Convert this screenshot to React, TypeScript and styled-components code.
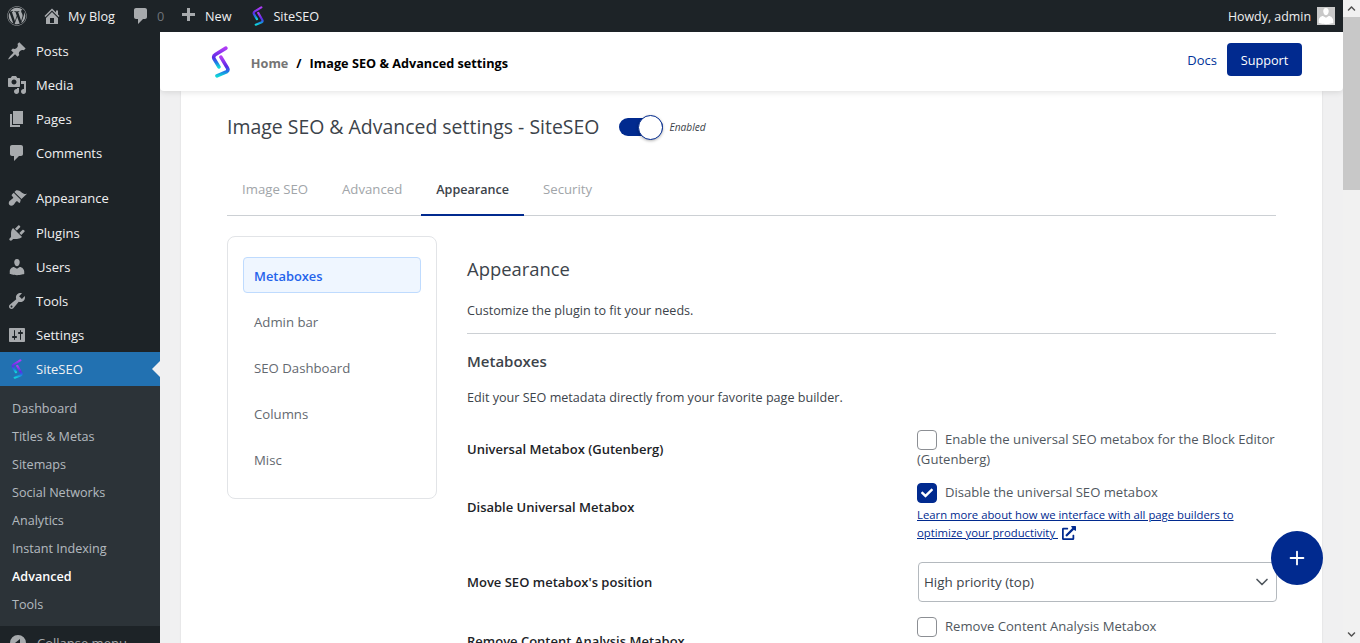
import React from 'react';
import styled, { createGlobalStyle } from 'styled-components';
import { FaWordpress, FaCheck, FaChevronUp, FaChevronDown, FaExternalLinkAlt } from 'react-icons/fa';
import { FiChevronDown, FiPlus } from 'react-icons/fi';

const GlobalStyle = createGlobalStyle`
  html, body {
    margin: 0;
    padding: 0;
    height: 100%;
    overflow: hidden;
    background: #f0f0f1;
  }
  * { box-sizing: border-box; }
  body {
    font-family: "Open Sans", "Noto Sans", sans-serif;
    font-size: 13px;
    color: #3c434a;
  }
`;

const Page = styled.div`
  position: relative;
  width: 1360px;
  height: 643px;
  display: flex;
  overflow: hidden;
`;

const Window = styled.div`
  flex: 1;
  min-width: 0;
  display: flex;
  flex-direction: column;
`;

const AdminBar = styled.header`
  height: 32px;
  flex: none;
  background: #1d2327;
  display: flex;
  align-items: center;
  justify-content: space-between;
  padding: 0 8px 0 7px;
  font-size: 12.7px;
`;

const BarGroup = styled.div`
  display: flex;
  align-items: center;
`;

const BarItem = styled.div<{ $gap?: number; $width?: number }>`
  display: flex;
  align-items: center;
  gap: ${(p) => p.$gap ?? 6}px;
  width: ${(p) => (p.$width ? `${p.$width}px` : 'auto')};
  color: #f0f0f1;
  svg { color: #a7aaad; flex: none; }
`;

const Howdy = styled.span`
  font-size: 12.4px;
`;

const Muted = styled.span`
  color: #6f7479;
`;

const Avatar = styled.span`
  width: 18px;
  height: 18px;
  margin-left: 6px;
  background: #c9c9c9;
  display: flex;
  align-items: center;
  justify-content: center;
  overflow: hidden;
  svg { color: #fff; }
`;

const Body = styled.div`
  flex: 1;
  min-height: 0;
  display: flex;
`;

const Sidebar = styled.nav`
  width: 160px;
  flex: none;
  background: #1d2327;
  display: flex;
  flex-direction: column;
  padding-top: 2px;
  overflow: hidden;
`;

const MenuGroup = styled.div`
  flex: none;
  margin-bottom: 11px;
`;

const MenuItem = styled.div<{ $active?: boolean }>`
  position: relative;
  height: 34.1px;
  flex: none;
  display: flex;
  align-items: center;
  padding-left: 7px;
  gap: 9px;
  font-size: 13px;
  color: #f0f0f1;
  background: ${(p) => (p.$active ? '#2271b1' : 'transparent')};
  svg { flex: none; color: #a7aaad; }
  ${(p) =>
    p.$active &&
    `&::after {
      content: '';
      position: absolute;
      right: 0;
      top: 9px;
      border: 8px solid transparent;
      border-right-color: #f0f0f1;
      border-left-width: 0;
    }`}
`;

const IconSlot = styled.span`
  width: 20px;
  height: 20px;
  display: flex;
  align-items: center;
  justify-content: center;
  flex: none;
`;

const SubMenu = styled.div`
  flex: none;
  background: #2c3338;
  padding: 8px 0 7px;
`;

const SubItem = styled.div<{ $current?: boolean }>`
  height: 28.15px;
  display: flex;
  align-items: center;
  padding-left: 12px;
  font-size: 12.6px;
  color: ${(p) => (p.$current ? '#fff' : 'rgba(240, 246, 252, 0.7)')};
  font-weight: ${(p) => (p.$current ? 600 : 400)};
`;

const Collapse = styled.div`
  flex: none;
  display: flex;
  align-items: center;
  gap: 9px;
  padding: 7px 0 0 8px;
  color: #a7aaad;
  font-size: 13px;
`;

const Main = styled.main`
  flex: 1;
  min-width: 0;
  display: flex;
  flex-direction: column;
  background: #f0f0f1;
  overflow: hidden;
`;

const TopBar = styled.div`
  position: relative;
  z-index: 2;
  height: 59px;
  flex: none;
  background: #fff;
  border-radius: 0 0 4px 4px;
  box-shadow: 0 1px 6px rgba(0, 0, 0, 0.12);
  display: flex;
  align-items: center;
  justify-content: space-between;
  padding: 0 41px 0 51px;
`;

const Crumbs = styled.div`
  display: flex;
  align-items: center;
  font-size: 12.7px;
  font-weight: 700;
  color: #000;
`;

const CrumbText = styled.span`
  padding-top: 2px;
`;

const CrumbHome = styled(CrumbText)`
  color: #757575;
  margin-left: 20px;
`;

const CrumbSep = styled(CrumbText)`
  margin: 0 8px;
`;

const TopActions = styled.div`
  display: flex;
  align-items: center;
  gap: 10px;
  margin-bottom: 4px;
`;

const DocsLink = styled.a`
  color: #003399;
  font-size: 13px;
  text-decoration: none;
`;

const SupportButton = styled.button`
  height: 33px;
  width: 75px;
  border: none;
  border-radius: 4px;
  background: #012a8f;
  color: #fff;
  font-family: inherit;
  font-size: 12.7px;
`;

const Card = styled.section`
  flex: 1;
  margin: 0 21px;
  background: #fff;
  box-shadow: 0 0 2px rgba(0, 0, 0, 0.1);
  padding: 21px 46px 0;
`;

const TitleRow = styled.div`
  display: flex;
  align-items: center;
  gap: 20px;
  height: 30px;
`;

const Title = styled.h1`
  margin: 0;
  font-size: 19.45px;
  font-weight: 400;
  line-height: 30px;
  color: #3c434a;
`;

const Toggle = styled.span`
  position: relative;
  width: 44px;
  height: 18px;
  border-radius: 9px;
  background: #012a8f;
  flex: none;
`;

const Knob = styled.span`
  position: absolute;
  right: 0;
  top: -3.5px;
  width: 25px;
  height: 25px;
  border-radius: 50%;
  background: #fff;
  border: 1px solid #012a8f;
  box-shadow: 0 1px 3px rgba(0, 0, 0, 0.3);
`;

const ToggleLabel = styled.em`
  font-size: 10.2px;
  color: #3c434a;
  margin: 0 0 1px -14px;
`;

const Tabs = styled.div`
  display: flex;
  margin-top: 28px;
  height: 46px;
  border-bottom: 1px solid #ccd0d4;
`;

const Tab = styled.div<{ $active?: boolean }>`
  padding: 0 15px 6px;
  height: 46px;
  display: flex;
  align-items: center;
  font-size: ${(p) => (p.$active ? 12.6 : 13.2)}px;
  font-weight: ${(p) => (p.$active ? 600 : 400)};
  color: ${(p) => (p.$active ? '#3c434a' : '#a1a5a9')};
  border-bottom: 2px solid ${(p) => (p.$active ? '#012a8f' : 'transparent')};
  margin-right: 4px;
`;

const Columns = styled.div`
  display: flex;
  gap: 30px;
  margin-top: 20px;
`;

const SideCard = styled.aside`
  width: 210px;
  height: 263px;
  flex: none;
  border: 1px solid #e2e4e7;
  border-radius: 8px;
  padding: 20px 15px;
  display: flex;
  flex-direction: column;
  gap: 10px;
`;

const SideItem = styled.div<{ $active?: boolean }>`
  height: 36px;
  display: flex;
  align-items: center;
  padding: 2px 10px 0;
  border-radius: 4px;
  font-size: ${(p) => (p.$active ? 12.9 : 13.2)}px;
  font-weight: ${(p) => (p.$active ? 600 : 500)};
  color: ${(p) => (p.$active ? '#2563eb' : '#646970')};
  background: ${(p) => (p.$active ? '#eff6ff' : 'transparent')};
  border: 1px solid ${(p) => (p.$active ? '#bfdbfe' : 'transparent')};
`;

const Content = styled.div`
  flex: 1;
  min-width: 0;
`;

const SectionTitle = styled.h2`
  margin: 19px 0 0;
  font-size: 18.4px;
  font-weight: 400;
  line-height: 28px;
  color: #3c434a;
`;

const Intro = styled.p`
  margin: 19px 0 0;
  font-size: 12.6px;
  line-height: 18px;
  padding-bottom: 13px;
  border-bottom: 1px solid #ccd0d4;
`;

const SubTitle = styled.h3`
  margin: 17px 0 0;
  font-size: 15px;
  font-weight: 600;
  line-height: 20px;
  color: #3c434a;
`;

const Desc = styled.p`
  margin: 17px 0 0;
  font-size: 12.6px;
  line-height: 20px;
`;

const Rows = styled.div`
  margin-top: 22px;
  display: grid;
  grid-template-columns: 450px 1fr;
  row-gap: 14px;
  align-items: start;
`;

const RowLabel = styled.div<{ $offset: number }>`
  margin-top: ${(p) => p.$offset}px;
  font-size: 13px;
  line-height: 20px;
  font-weight: 600;
  color: #1d2327;
`;

const Control = styled.div`
  font-size: 13.1px;
  line-height: 19px;
  color: #50575e;
`;

const CheckRow = styled.label`
  display: block;
`;

const Check = styled.span<{ $on?: boolean }>`
  display: inline-flex;
  align-items: center;
  justify-content: center;
  vertical-align: top;
  width: 20px;
  height: 20px;
  margin-right: 8px;
  border-radius: 4px;
  border: 1px solid ${(p) => (p.$on ? '#012a8f' : '#8c8f94')};
  background: ${(p) => (p.$on ? '#012a8f' : '#fff')};
  color: #fff;
`;

const LearnLink = styled.a`
  display: block;
  max-width: 330px;
  font-size: 11.3px;
  line-height: 18px;
  color: #012a8f;
  text-decoration: underline;
  margin: 3px 0 6px;
  svg { margin-left: 4px; vertical-align: -3px; }
`;

const SelectBox = styled.div`
  width: 100%;
  margin: 0 0 1px 1px;
  height: 40px;
  border: 1px solid #b4b9be;
  border-radius: 4px;
  display: flex;
  align-items: center;
  justify-content: space-between;
  padding: 0 4px 0 5px;
  font-size: 13.4px;
  color: #3c434a;
  svg { color: #50575e; }
`;

const Fab = styled.button`
  position: absolute;
  left: 1271px;
  top: 531px;
  width: 52px;
  height: 54px;
  border: none;
  border-radius: 50%;
  background: #012a8f;
  color: #fff;
  display: flex;
  align-items: center;
  justify-content: center;
  z-index: 3;
`;

const Scrollbar = styled.div`
  width: 17px;
  flex: none;
  background: #f1f1f1;
  display: flex;
  flex-direction: column;
  color: #505050;
`;

const ScrollArrow = styled.div`
  height: 17px;
  flex: none;
  display: flex;
  align-items: center;
  justify-content: center;
`;

const ScrollThumb = styled.div`
  width: 100%;
  height: 173px;
  flex: none;
  background: #c8c8c8;
`;

const ScrollTrack = styled.div`
  flex: 1;
  width: 100%;
`;

const Logo: React.FC<{ size: number; id: string }> = ({ size, id }) => (
  <svg width={size * 0.62} height={size} viewBox="0 0 20 32" fill="none">
    <defs>
      <linearGradient id={id} x1="0.5" y1="0" x2="0.5" y2="1">
        <stop offset="0" stopColor="#b13cf5" />
        <stop offset="0.5" stopColor="#5a2ae6" />
        <stop offset="0.78" stopColor="#1c7fe6" />
        <stop offset="1" stopColor="#10d5d8" />
      </linearGradient>
    </defs>
    <path
      d="M15 2 L4.500 8.500 Q2 10 3 12.500 L8 21"
      stroke={`url(#${id})`}
      strokeWidth="3.6"
      strokeLinecap="round"
      strokeLinejoin="round"
    />
    <path
      d="M10 11 L16.500 22 Q18 24.500 15.500 26 L6 30"
      stroke={`url(#${id})`}
      strokeWidth="3.6"
      strokeLinecap="round"
      strokeLinejoin="round"
    />
  </svg>
);

// wp-admin menu glyphs
const glyphs = {
  home: 'M16 8.500l1.530 1.530-1.060 1.060L10 4.620l-6.470 6.470-1.060-1.060L10 2.500l4 4v-2h2v4zm-6-2.460l6 5.990V18H4v-5.970zM12 17v-5H8v5h4z',
  comment: 'M5 2h9c1.100 0 2 .9 2 2v7c0 1.100-.9 2-2 2h-2l-5 5v-5H5c-1.100 0-2-.9-2-2V4c0-1.100.9-2 2-2z',
  plus: 'M17 7v3h-5v5H9v-5H4V7h5V2h3v5h5z',
  post: 'M10.440 3.020l1.820-1.820 6.360 6.350-1.830 1.820c-1.050-.68-2.480-.57-3.410.36l-.75.75c-.92.93-1.040 2.350-.35 3.400l-1.830 1.820-2.410-2.410-2.800 2.790c-.42.420-3.380 2.710-3.800 2.290s1.860-3.390 2.280-3.810l2.790-2.790L4.100 9.360l1.830-1.820c1.050.69 2.480.57 3.400-.36l.75-.75c.93-.92 1.050-2.350.36-3.410z',
  media: 'M13 11V4c0-.55-.45-1-1-1h-1.670L9 1H5L3.670 3H2c-.55 0-1 .45-1 1v7c0 .55.45 1 1 1h10c.55 0 1-.45 1-1zM7 4.500c1.380 0 2.500 1.120 2.500 2.500S8.380 9.500 7 9.500 4.500 8.380 4.500 7 5.620 4.500 7 4.500zM14 6h5v10.500c0 1.380-1.120 2.500-2.500 2.500S14 17.880 14 16.500s1.120-2.500 2.500-2.500c.17 0 .34.020.5.050V9h-3V6zm-4 8.050V13h2v3.500c0 1.380-1.120 2.500-2.500 2.500S7 17.880 7 16.500 8.120 14 9.500 14c.17 0 .34.020.5.050z',
  page: 'M6 15V2h10v13H6zm-1 1h8v2H3V5h2v11z',
  brush: 'M14.480 11.060L7.410 3.990l1.500-1.500c.5-.56 2.300-.47 3.510.32 1.210.8 1.430 1.280 2.910 2.100 1.180.64 2.450 1.260 4.670.85l-5.520 5.300zm-.71.71L6.700 4.700 4.930 6.470c-.39.39-.39 1.020 0 1.410l1.060 1.060c.39.39.39 1.030 0 1.420-.6.600-1.430 1.150-2.210 1.690-.35.240-.7.490-1.010.8-1.200 1.200-1.400 3.100-.3 4.200 1.100 1.100 3 .9 4.200-.3.300-.3.550-.65.800-1 .550-.780 1.100-1.610 1.690-2.210.39-.39 1.030-.39 1.420 0l1.060 1.060c.39.39 1.020.39 1.410 0z',
  plugin: 'M13.110 4.360L9.870 7.600 8 5.730l3.240-3.240c.35-.34 1.050-.2 1.560.32.520.51.660 1.210.31 1.550zm-8 1.770l.91-1.120 9.010 9.010-1.190.84c-.71.710-2.630 1.160-3.820 1.160H6.140L4.900 17.260c-.59.590-1.540.59-2.120 0-.59-.58-.59-1.530 0-2.120l1.240-1.240v-3.880c0-1.130.4-3.190 1.090-3.890zm7.260 3.970l3.240-3.240c.34-.35 1.040-.21 1.550.31.520.51.660 1.210.31 1.550l-3.240 3.250z',
  user: 'M10 9.250c-2.270 0-2.730-3.440-2.730-3.440C7 4.020 7.820 2 9.970 2c2.160 0 2.980 2.020 2.710 3.810 0 0-.41 3.440-2.680 3.440zm0 2.570L12.720 10c2.390 0 4.520 2.330 4.520 4.530v2.490s-3.650 1.130-7.240 1.130c-3.650 0-7.240-1.130-7.240-1.130v-2.490c0-2.250 1.940-4.480 4.150-4.480z',
  tool: 'M16.680 9.770c-1.340 1.340-3.300 1.670-4.950.99l-5.410 6.520c-.99.990-2.590.99-3.580 0s-.99-2.590 0-3.570l6.520-5.420c-.68-1.650-.35-3.610.99-4.950 1.280-1.280 3.120-1.620 4.720-1.060l-2.890 2.890 2.820 2.820 2.860-2.870c.53 1.580.18 3.400-1.080 4.670zM3.810 16.210c.4.390 1.040.39 1.430 0 .4-.4.400-1.040 0-1.430-.39-.4-1.030-.4-1.430 0-.39.39-.39 1.030 0 1.430z',
  settings: 'M18 16V4c0-.55-.45-1-1-1H3c-.55 0-1 .45-1 1v12c0 .55.45 1 1 1h14c.55 0 1-.45 1-1zM8 11h1c.55 0 1 .45 1 1s-.45 1-1 1H8v1.500c0 .28-.22.5-.5.5s-.5-.22-.5-.5V13H6c-.55 0-1-.45-1-1s.45-1 1-1h1V5.500c0-.28.22-.5.5-.5s.5.22.5.5V11zm5-2h-1c-.55 0-1-.45-1-1s.45-1 1-1h1V5.500c0-.28.22-.5.5-.5s.5.22.5.5V7h1c.55 0 1 .45 1 1s-.45 1-1 1h-1v5.500c0 .28-.22.5-.5.5s-.5-.22-.5-.5V9z',
  collapse: 'M10 2a8 8 0 1 1 0 16 8 8 0 0 1 0-16zM12 14V6l-5 4z',
};

const Glyph: React.FC<{ name: keyof typeof glyphs }> = ({ name }) => (
  <svg width="20" height="20" viewBox="0 0 20 20" fill="currentColor" fillRule="evenodd">
    <path d={glyphs[name]} />
  </svg>
);

const topMenu: { label: string; icon: keyof typeof glyphs }[] = [
  { label: 'Posts', icon: 'post' },
  { label: 'Media', icon: 'media' },
  { label: 'Pages', icon: 'page' },
  { label: 'Comments', icon: 'comment' },
];

const midMenu: { label: string; icon: keyof typeof glyphs }[] = [
  { label: 'Appearance', icon: 'brush' },
  { label: 'Plugins', icon: 'plugin' },
  { label: 'Users', icon: 'user' },
  { label: 'Tools', icon: 'tool' },
  { label: 'Settings', icon: 'settings' },
];

const subMenu = ['Dashboard', 'Titles & Metas', 'Sitemaps', 'Social Networks', 'Analytics', 'Instant Indexing', 'Advanced', 'Tools'];
const sideNav = ['Metaboxes', 'Admin bar', 'SEO Dashboard', 'Columns', 'Misc'];

export default function App() {
  return (
    <Page>
      <GlobalStyle />
      <Window>
        <AdminBar>
          <BarGroup>
            <BarItem $width={35}>
              <FaWordpress size={20} />
            </BarItem>
            <BarItem $width={89}>
              <Glyph name="home" />
              My Blog
            </BarItem>
            <BarItem $width={47}>
              <Glyph name="comment" />
              <Muted>0</Muted>
            </BarItem>
            <BarItem $width={74} $gap={7}>
              <Glyph name="plus" />
              New
            </BarItem>
            <BarItem $gap={9}>
              <Logo size={20} id="bar-logo" />
              SiteSEO
            </BarItem>
          </BarGroup>
          <BarGroup>
            <BarItem $gap={0}>
              <Howdy>Howdy, admin</Howdy>
              <Avatar>
                <Glyph name="user" />
              </Avatar>
            </BarItem>
          </BarGroup>
        </AdminBar>
        <Body>
          <Sidebar>
            <MenuGroup>
              {topMenu.map((item) => (
                <MenuItem key={item.label}>
                  <IconSlot>
                    <Glyph name={item.icon} />
                  </IconSlot>
                  {item.label}
                </MenuItem>
              ))}
            </MenuGroup>
            {midMenu.map((item) => (
              <MenuItem key={item.label}>
                <IconSlot>
                  <Glyph name={item.icon} />
                </IconSlot>
                {item.label}
              </MenuItem>
            ))}
            <MenuItem $active>
              <IconSlot>
                <Logo size={20} id="menu-logo" />
              </IconSlot>
              SiteSEO
            </MenuItem>
            <SubMenu>
              {subMenu.map((label) => (
                <SubItem key={label} $current={label === 'Advanced'}>
                  {label}
                </SubItem>
              ))}
            </SubMenu>
            <Collapse>
              <Glyph name="collapse" />
              Collapse menu
            </Collapse>
          </Sidebar>
          <Main>
            <TopBar>
              <Crumbs>
                <Logo size={32} id="top-logo" />
                <CrumbHome>Home</CrumbHome>
                <CrumbSep>/</CrumbSep>
                <CrumbText>Image SEO &amp; Advanced settings</CrumbText>
              </Crumbs>
              <TopActions>
                <DocsLink href="#">Docs</DocsLink>
                <SupportButton>Support</SupportButton>
              </TopActions>
            </TopBar>
            <Card>
              <TitleRow>
                <Title>Image SEO &amp; Advanced settings - SiteSEO</Title>
                <Toggle>
                  <Knob />
                </Toggle>
                <ToggleLabel>Enabled</ToggleLabel>
              </TitleRow>
              <Tabs>
                <Tab>Image SEO</Tab>
                <Tab>Advanced</Tab>
                <Tab $active>Appearance</Tab>
                <Tab>Security</Tab>
              </Tabs>
              <Columns>
                <SideCard>
                  {sideNav.map((label, i) => (
                    <SideItem key={label} $active={i === 0}>
                      {label}
                    </SideItem>
                  ))}
                </SideCard>
                <Content>
                  <SectionTitle>Appearance</SectionTitle>
                  <Intro>Customize the plugin to fit your needs.</Intro>
                  <SubTitle>Metaboxes</SubTitle>
                  <Desc>Edit your SEO metadata directly from your favorite page builder.</Desc>
                  <Rows>
                    <RowLabel $offset={9}>Universal Metabox (Gutenberg)</RowLabel>
                    <Control>
                      <CheckRow>
                        <Check />
                        Enable the universal SEO metabox for the Block Editor (Gutenberg)
                      </CheckRow>
                    </Control>
                    <RowLabel $offset={14}>Disable Universal Metabox</RowLabel>
                    <Control>
                      <CheckRow>
                        <Check $on>
                          <FaCheck size={12} />
                        </Check>
                        Disable the universal SEO metabox
                      </CheckRow>
                      <LearnLink href="#">
                        Learn more about how we interface with all page builders to optimize your productivity&nbsp;
                        <FaExternalLinkAlt size={14} />
                      </LearnLink>
                    </Control>
                    <RowLabel $offset={10}>Move SEO metabox's position</RowLabel>
                    <Control>
                      <SelectBox>
                        High priority (top)
                        <FiChevronDown size={20} />
                      </SelectBox>
                    </Control>
                    <RowLabel $offset={14}>Remove Content Analysis Metabox</RowLabel>
                    <Control>
                      <CheckRow>
                        <Check />
                        Remove Content Analysis Metabox
                      </CheckRow>
                    </Control>
                  </Rows>
                </Content>
              </Columns>
            </Card>
          </Main>
        </Body>
      </Window>
      <Scrollbar>
        <ScrollArrow>
          <FaChevronUp size={9} />
        </ScrollArrow>
        <ScrollThumb />
        <ScrollTrack />
        <ScrollArrow>
          <FaChevronDown size={9} />
        </ScrollArrow>
      </Scrollbar>
      <Fab>
        <FiPlus size={22} />
      </Fab>
    </Page>
  );
}
